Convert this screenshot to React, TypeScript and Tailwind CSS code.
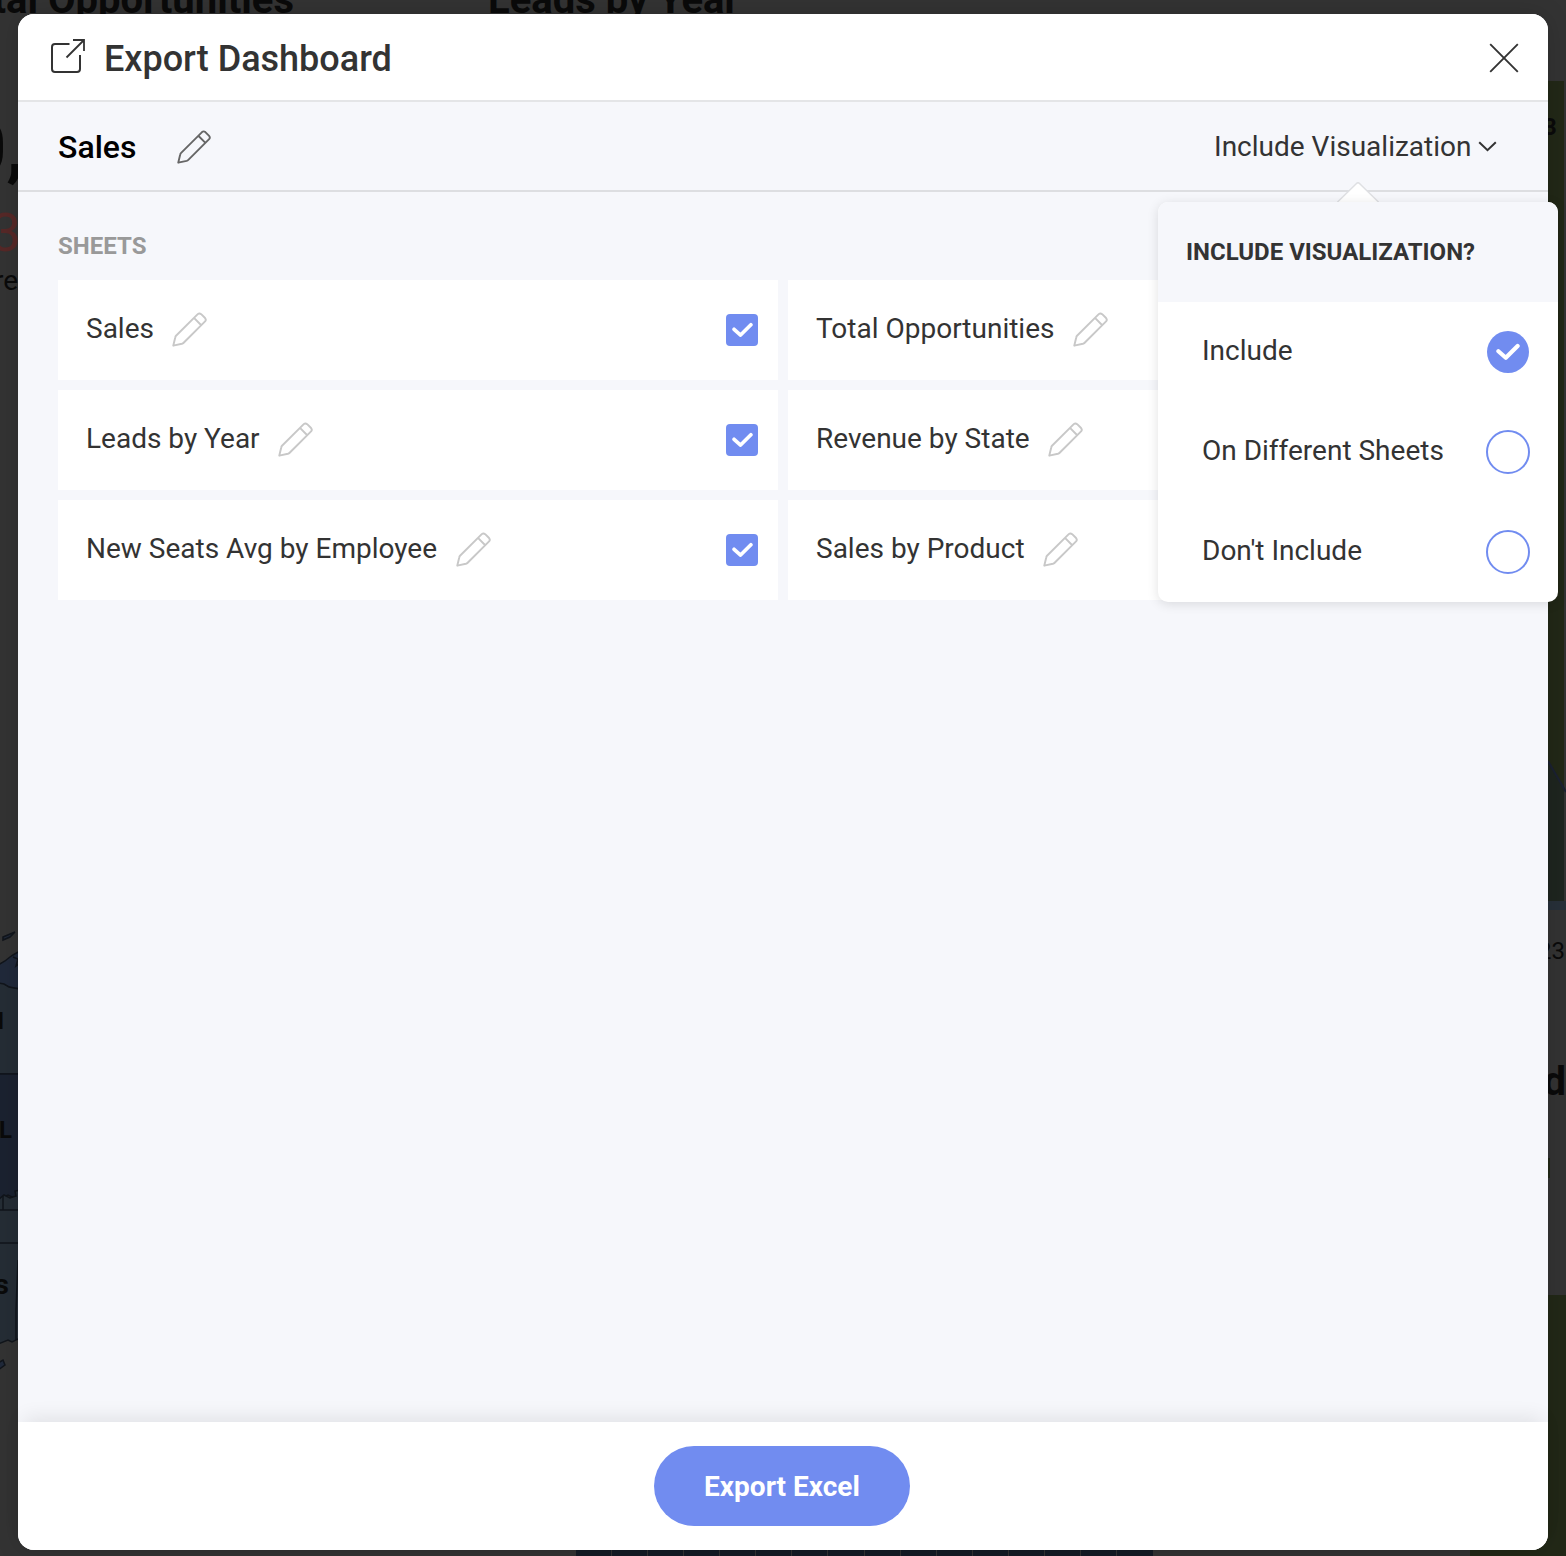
import React from "react";

function Pencil({ className, width = 1.8 }: { className?: string; width?: number }) {
  return (
    <svg viewBox="0 0 36 36" className={className} fill="none" stroke="currentColor" strokeWidth={width} strokeLinejoin="round">
      <path d="M1.3 34.6 L3.4 26 Q3.6 25 4.4 24.2 L26.5 2.2 Q28.2 .7 30 2.2 L34 6.2 Q35.5 8 34 9.7 L12 31.6 Q11.2 32.4 10.2 32.7 Z M22.6 6.1 L30.1 13.6" />
    </svg>
  );
}

function Check({ className }: { className?: string }) {
  return (
    <svg viewBox="0 0 24 18" className={className} fill="none" stroke="white" strokeWidth={4.2} strokeLinecap="round" strokeLinejoin="round">
      <path d="M2.4 8.2 L9.8 14.8 L21.6 3" />
    </svg>
  );
}

function SheetCard({ name }: { name: string }) {
  return (
    <div className="flex h-[100px] items-center bg-white pl-7 pr-5">
      <span className="-mt-0.5 whitespace-nowrap text-[28px] leading-8">{name}</span>
      <Pencil className="-mt-px ml-[18.5px] size-[35px] shrink-0 text-[#c8c8c8]" width={2} />
      <div className="ml-auto flex size-8 items-center justify-center rounded-[4px] bg-[#718cf0]">
        <Check className="h-[16px] w-[21px]" />
      </div>
    </div>
  );
}

function Option({ label, selected }: { label: string; selected?: boolean }) {
  return (
    <div className="flex h-[100px] items-center justify-between pl-11 pr-7">
      <span className="-mt-0.5 text-[28px] leading-8">{label}</span>
      {selected ? (
        <div className="mr-px flex size-[42px] items-center justify-center rounded-full bg-[#718cf0]">
          <Check className="h-[18px] w-6" />
        </div>
      ) : (
        <div className="size-11 rounded-full border-2 border-[#718cf0]" />
      )}
    </div>
  );
}

/* Dimmed dashboard that shows round the dialog's edges */
function Backdrop() {
  return (
    <div className="absolute inset-0 overflow-hidden bg-[#333333] text-[#0a0a0a]">
      <span className="absolute right-[1272px] top-[-24px] whitespace-nowrap text-[40px] font-bold leading-[48px]">Total Opportunities</span>
      <span className="absolute left-[488px] top-[-24px] whitespace-nowrap text-[40px] font-bold leading-[48px]">Leads by Year</span>
      <span className="absolute right-[1542px] top-[99px] text-[72px] font-bold leading-[100px]">0,</span>
      <span className="absolute right-[1545px] top-[203px] text-[54px] leading-[60px] text-[#562827]">3</span>
      <span className="absolute right-[1548px] top-[265px] text-[28px] leading-8">re</span>
      <svg className="absolute left-0 top-[920px]" width="18" height="460" stroke="#11151b" strokeWidth="1.5">
        <path d="M-2 45 L5 41 L10 37 L13 35 L20 31 V71 L-2 63Z" fill="#20293a" />
        <path d="M13 37 L18 39 L16 46 L20 43" fill="none" />
        <path d="M-2 63 L4 64 L9 67 L20 69 V154 H-2Z" fill="#252d35" />
        <path d="M-2 154 H20 V272 L14 278 L8 275 L-2 280Z" fill="#1b2230" />
        <path d="M-2 280 L4 275 L10 278 L16 276 L15 271 L20 270 V418 L12 422 L8 420 L-2 424Z" fill="#252d35" />
        <path d="M-2 290 H20 M-2 323 H20 M3 276 V290 M18 340 L16 390 V420" fill="none" />
        <path d="M3 17 L15 12 L10 17 L3 20Z M-2 443 L3 440 L5 445 L-2 450Z" fill="#20293a" />
      </svg>
      <span className="absolute right-[1562px] top-[1007px] text-[24px] font-bold leading-7">M</span>
      <span className="absolute right-[1554px] top-[1116px] text-[24px] font-bold leading-7">L</span>
      <span className="absolute right-[1557px] top-[1269px] text-[28px] font-bold leading-8">s</span>
      <svg className="absolute left-[1548px] top-[81px]" width="18" height="829">
        <path d="M0 0H16V828H0Z" fill="#222817" />
        <path d="M0 681L16 707V820H0Z" fill="#1e251f" />
        <path d="M0 820H18V829H0Z" fill="#273039" />
        <path d="M0 680L18 711" stroke="#1b2132" strokeWidth="2" />
      </svg>
      <span className="absolute left-[1543px] top-[113px] text-[24px] font-bold leading-7">3</span>
      <span className="absolute right-[1px] top-[937px] text-[24px] leading-7">23</span>
      <span className="absolute right-0 top-[1058px] text-[40px] font-bold leading-[48px]">d</span>
      <div className="absolute left-[1548px] top-[1158px] h-5 w-0.5 bg-[#222817]" />
      <div className="absolute left-[1470px] top-[1295px] h-[261px] w-24 bg-[#222817]" />
      <div className="absolute left-[576px] top-[1540px] grid h-4 w-[577px] grid-cols-16 divide-x divide-[#333333] bg-[#141b25]">
        {Array.from({ length: 16 }, (_, i) => (
          <div key={i} />
        ))}
      </div>
    </div>
  );
}

export default function App() {
  return (
    <div className="relative h-[1556px] w-[1566px] overflow-hidden pl-[18px] pt-[14px] font-['Roboto',sans-serif] text-[#333333]">
      <Backdrop />
      <main className="relative flex h-[1536px] w-[1530px] flex-col rounded-[16px] bg-[#f6f7fb] shadow-[0_0_24px_rgba(0,0,0,0.15)]">
        <header className="flex h-[88px] items-center rounded-t-[16px] border-b-2 border-[#e4e5e7] bg-white pl-8 pr-[29px]">
          <svg className="-mt-0.5 size-9 shrink-0" viewBox="0 0 36 36" fill="none" stroke="currentColor" strokeWidth="2">
            <path d="M19.5 6H5Q2 6 2 9V31Q2 34 5 34H27Q30 34 30 31V17" />
            <path d="M23 2H34V13M34 2L16.5 19.5" strokeWidth="1.8" />
          </svg>
          <h1 className="ml-[18px] mt-1 text-[36px] font-medium leading-10">Export Dashboard</h1>
          <svg className="ml-auto mt-0.5 size-[30px]" viewBox="0 0 30 30" stroke="currentColor" strokeWidth="1.9">
            <path d="M1.2 1.2L28.8 28.8M28.8 1.2L1.2 28.8" />
          </svg>
        </header>

        <div className="flex h-[90px] shrink-0 items-center border-b-2 border-[#dddee1] px-10">
          <h2 className="mt-0.5 text-[32px] font-medium leading-9 text-black">Sales</h2>
          <Pencil className="ml-[41px] mt-px size-[34px] text-[#666666]" width={2} />
          <button className="relative ml-auto mr-[11px] mt-0.5 flex items-center gap-[6.5px] text-[28px] leading-8">
            Include Visualization
            <svg className="-mt-0.5 h-[11px] w-[19px]" viewBox="0 0 19 11" fill="none" stroke="currentColor" strokeWidth="2">
              <path d="M1.2 1.2L9.5 9.2L17.8 1.2" />
            </svg>
          </button>
        </div>

        <section className="grow px-10 pt-[38px]">
          <h3 className="text-[24px] font-bold leading-8 text-[#999999]">SHEETS</h3>
          <div className="mt-[18px] grid grid-cols-[720px_720px] gap-[10px]">
            <SheetCard name="Sales" />
            <SheetCard name="Total Opportunities" />
            <SheetCard name="Leads by Year" />
            <SheetCard name="Revenue by State" />
            <SheetCard name="New Seats Avg by Employee" />
            <SheetCard name="Sales by Product" />
          </div>
        </section>

        <footer className="flex h-32 items-center justify-center rounded-b-[16px] bg-white pr-0.5 shadow-[0_-10px_20px_-6px_rgba(0,0,0,0.09)]">
          <button className="h-20 w-64 rounded-full bg-[#718cf0] pt-0.5 text-[28px] font-bold text-white">Export Excel</button>
        </footer>

        {/* Popover anchored under the visualization button */}
        <div className="absolute right-[-10px] top-[188px] w-[400px]">
          <svg className="absolute left-[179px] top-[-20px]" width="42" height="21" viewBox="0 0 42 21">
            <path d="M0 20.5L21 0L42 20.5Z" fill="white" />
            <path d="M0 20.5L19.5 1.5Q21 0 22.5 1.5L42 20.5" fill="none" stroke="#dfe0e3" strokeWidth="1.5" />
          </svg>
          <div className="relative overflow-hidden rounded-[10px] bg-white shadow-[0_2px_12px_rgba(0,0,0,0.12)]">
            <div className="flex h-[100px] items-center bg-[#f6f7fb] pl-7 text-[24px] font-bold leading-7">INCLUDE VISUALIZATION?</div>
            <Option label="Include" selected />
            <Option label="On Different Sheets" />
            <Option label="Don't Include" />
          </div>
        </div>
      </main>
    </div>
  );
}
